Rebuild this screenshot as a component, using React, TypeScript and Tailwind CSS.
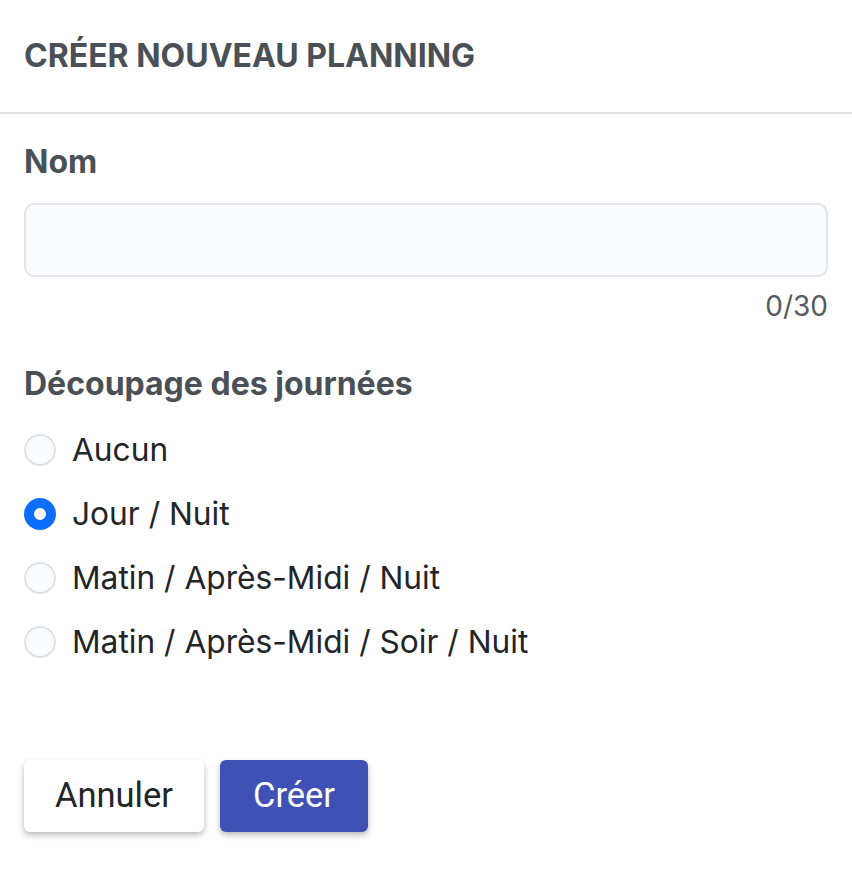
import React, { useState } from "react";

const options = [
  "Aucun",
  "Jour / Nuit",
  "Matin / Après-Midi / Nuit",
  "Matin / Après-Midi / Soir / Nuit",
];

export default function App() {
  const [selected, setSelected] = useState(1);
  const [name, setName] = useState("");
  return (
    <div className="w-[852px] h-[888px] bg-white font-['Inter',sans-serif]">
      <div className="h-[114px] flex items-center px-6 border-b-2 border-[#dee2e6]">
        <h1 className="text-[32px] leading-[40px] font-bold uppercase text-[#495057]">
          Créer nouveau planning
        </h1>
      </div>
      <div className="px-6 pt-[28px]">
        <label className="block text-[32px] leading-[40px] font-bold text-[#495057]">Nom</label>
        <input
          value={name}
          maxLength={30}
          onChange={(e) => setName(e.target.value)}
          className="mt-[21px] block w-full h-[74px] rounded-[10px] border-2 border-[#e1e4e9] bg-[#fafbfd] px-4 text-[30px] outline-none"
        />
        <div className="mt-[13px] text-right text-[28px] leading-[32px] text-[#555b61]">
          {name.length}/30
        </div>
        <div className="mt-[42px] text-[32px] leading-[40px] font-bold text-[#495057]">
          Découpage des journées
        </div>
        <div className="mt-[14px] flex flex-col">
          {options.map((o, i) => (
            <label key={o} className="h-[64px] flex items-center gap-4 cursor-pointer" onClick={() => setSelected(i)}>
              {selected === i ? (
                <span className="w-[32px] h-[32px] rounded-full bg-[#0d6efd] flex items-center justify-center">
                  <span className="w-[12px] h-[12px] rounded-full bg-white" />
                </span>
              ) : (
                <span className="w-[32px] h-[32px] rounded-full border-2 border-[#dee2e6] bg-[#fafbfd]" />
              )}
              <span className="text-[31.7px] leading-[40px] text-[#212529]">{o}</span>
            </label>
          ))}
        </div>
        <div className="mt-[86px] flex gap-4">
          <button className="w-[180px] h-[72px] rounded-[6px] bg-white shadow-[0_3px_6px_rgba(0,0,0,0.28)] font-['Roboto',sans-serif] text-[34.5px] text-[#212529]">
            Annuler
          </button>
          <button className="w-[148px] h-[72px] rounded-[6px] bg-[#3f51b5] shadow-[0_3px_6px_rgba(0,0,0,0.28)] font-['Roboto',sans-serif] text-[34.5px] text-white">
            Créer
          </button>
        </div>
      </div>
    </div>
  );
}
